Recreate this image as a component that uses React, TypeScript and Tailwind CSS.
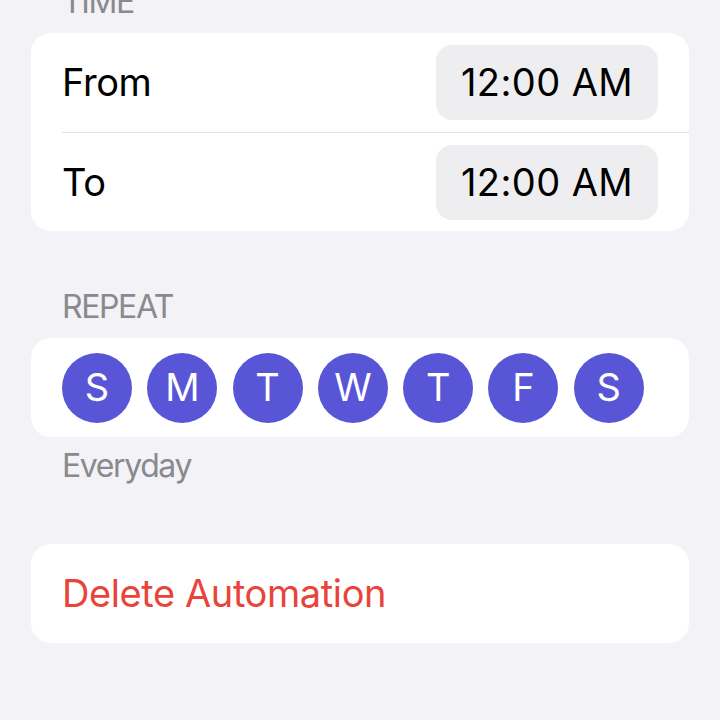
import React from 'react';

const days = ['S', 'M', 'T', 'W', 'T', 'F', 'S'];

const TimeRow: React.FC<{ label: string; value: string; h: string }> = ({ label, value, h }) => (
    <div className={`flex items-center justify-between pl-[31px] pr-[31px] ${h}`}>
        <span className="text-[38px] text-black tracking-[-0.4px]">{label}</span>
        <div className="w-[222px] h-[75px] rounded-[16px] bg-[#eeeef0] flex items-center justify-center">
            <span className="text-[38px] text-black tracking-[0.4px]">{value}</span>
        </div>
    </div>
);

export default function App() {
    return (
        <div className="w-[720px] h-[720px] overflow-hidden bg-[#f2f2f7] px-[31px] font-['Inter',sans-serif]">
            {/* Time */}
            <div className="h-[33px] -mt-[15px] mb-[15px] pl-[31px] text-[32px] leading-[33px] tracking-[-1.4px] text-[#8a8a8e]">TIME</div>
            <div className="bg-white rounded-[20px]">
                <TimeRow label="From" value="12:00 AM" h="h-[99px]" />
                <div className="ml-[31px] h-px bg-[#e2e2e6]" />
                <TimeRow label="To" value="12:00 AM" h="h-[98px]" />
            </div>

            {/* Repeat */}
            <div className="h-[33px] mt-[59px] mb-[15px] pl-[31px] text-[32px] leading-[33px] tracking-[-1.4px] text-[#8a8a8e]">REPEAT</div>
            <div className="bg-white rounded-[20px] h-[99px] pl-[31px] flex items-center gap-[15.3px]">
                {days.map((d, i) => (
                    <div key={i} className="w-[70px] h-[70px] rounded-full bg-[#5856d6] flex items-center justify-center">
                        <span className="text-[38px] text-white">{d}</span>
                    </div>
                ))}
            </div>
            <div className="h-[33px] mt-[12px] pl-[31px] text-[32px] leading-[33px] tracking-[-1.4px] text-[#8a8a8e]">Everyday</div>

            {/* Delete */}
            <div className="mt-[62px] bg-white rounded-[20px] h-[99px] pl-[31px] flex items-center">
                <span className="text-[38px] text-[#e9443a] tracking-[-0.4px]">Delete Automation</span>
            </div>
        </div>
    );
}
